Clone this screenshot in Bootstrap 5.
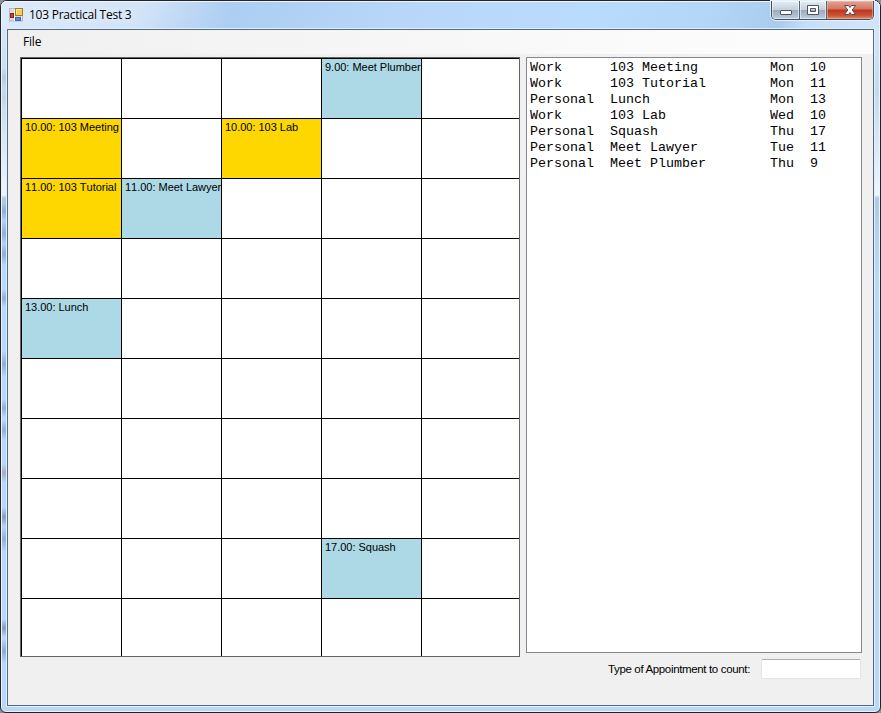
<!DOCTYPE html>
<html lang="en">
<head>
<meta charset="utf-8">
<meta name="viewport" content="width=device-width, initial-scale=1">
<title>103 Practical Test 3</title>
<link href="https://cdn.jsdelivr.net/npm/bootstrap@5.3.0/dist/css/bootstrap.min.css" rel="stylesheet">
<style>
body{background:#8f8f8f;font-family:"Liberation Sans",Arial,sans-serif;color:#000}
.app-window{width:881px;height:713px;border:1px solid #20242e;border-radius:7px 7px 6px 6px;padding:0 6px 6px;
  box-shadow:inset 0 0 0 1px #e9f5ff;
  background:
    radial-gradient(ellipse 12px 10px at 3px 77px,#b3cbe6,transparent),
    radial-gradient(ellipse 12px 9px at 3px 98px,#c0d4ea,transparent),
    radial-gradient(ellipse 12px 9px at 3px 210px,#8fadd0,transparent),
    radial-gradient(ellipse 12px 11px at 3px 232px,#8fadd0,transparent),
    radial-gradient(ellipse 12px 11px at 3px 253px,#8fadd0,transparent),
    radial-gradient(ellipse 12px 9px at 3px 297px,#8fadd0,transparent),
    radial-gradient(ellipse 12px 13px at 3px 363px,#8fadd0,transparent),
    radial-gradient(ellipse 12px 9px at 3px 407px,#8fadd0,transparent),
    radial-gradient(ellipse 12px 10px at 3px 429px,#8fadd0,transparent),
    radial-gradient(ellipse 12px 9px at 3px 472px,#a9a7c3,transparent),
    radial-gradient(ellipse 12px 10px at 3px 516px,#859cba,transparent),
    radial-gradient(ellipse 12px 13px at 3px 538px,#8fadd0,transparent),
    radial-gradient(ellipse 12px 9px at 3px 627px,#859cba,transparent),
    radial-gradient(ellipse 12px 12px at 3px 650px,#8ba8c8,transparent),
    linear-gradient(#d3e6fa 28px,#c5d9ee 90px,#eff5fc 194px,#aecae6 197px,#b9d9f9 270px,#b9d7f8)}
.title-bar{height:28px;margin:0 -6px;padding:0 6px 0 8px;border-radius:6px 6px 0 0;
  box-shadow:inset 0 1px #eef7ff,inset 1px 0 #e9f5ff,inset -1px 0 #e9f5ff;
  background:linear-gradient(115deg,#dceafa 0,#d3e4f7 130px,#bcd6f3 180px,#abcef2 215px,#b2d3f5 300px,#b9d8f9 390px,#b9dbfc 540px,#b4d6f6 650px,#a9cbec 715px,#c5dff9 740px,#cfe3fa 780px,#cfe3fa)}
.title-text,.menu-text{font-family:"Open Sans","Noto Sans",sans-serif;font-size:12px;line-height:16px}
.title-text{letter-spacing:-.25px;margin-left:6px;padding-top:6px;text-shadow:0 0 6px #fff}
.app-icon{margin-top:7px}
.caption-buttons{width:103px;height:19px;border:1px solid #45505f;border-top:0;border-radius:0 0 5px 5px;overflow:hidden;box-shadow:0 0 0 1px #e4f1fd}
.cap-btn{border:0;padding:0;background:linear-gradient(#e3edf7,#c4d0de 48%,#9aaabd 50%,#bdcde0);box-shadow:inset 0 0 0 1px #ffffff88}
.cap-min{width:28px;border-right:1px solid #596575}
.cap-max{width:27px;border-right:1px solid #596575}
.cap-close{width:46px;background:linear-gradient(#e6a293,#d37562 45%,#bd3419 50%,#cb5535 80%,#e08a67);box-shadow:inset 0 0 0 1px #ffc9b377}
.client{width:867px;height:677px;border:1px solid #54697d;background:#f0f0f0;box-shadow:0 0 0 1px #dff1fd}
.menu-strip{height:24px;background:linear-gradient(90deg,#f0f0f0,#fcfcfc 85%);padding:4px 15px}
.menu-text{letter-spacing:-.2px}
.work-area{padding:3px 11px 0 12px;gap:6px}
.calendar{width:500px;height:600px;border:1px solid #646464;background:#fff;display:grid;grid-template-columns:repeat(5,100px);grid-auto-rows:60px;overflow:hidden}
.slot{border-left:1px solid #000;border-top:1px solid #000;font-size:11px;line-height:13px;padding:2px 0 0 3px;white-space:nowrap;font-kerning:none;letter-spacing:-.02px}
.slot-work{background:#ffd700}
.slot-personal{background:#add8e6}
.appt-list{width:336px;height:596px;border:1px solid #828790;background:#fff;padding:2px 3px;margin:0;font:13.333px/16px "Liberation Mono","Courier New",monospace;color:#000;overflow:hidden}
.count-row{margin-top:6px;height:20px;gap:11px;padding-right:1px}
.count-label{font-size:11.5px;letter-spacing:-.35px;line-height:16px;white-space:nowrap}
.count-input{width:100px;height:20px;min-height:0;padding:1px 3px;border:1px solid #e2e3ea;border-top-color:#abadb3;border-radius:2px;font-size:12px;background:#fff}
</style>
</head>
<body class="m-0 overflow-hidden">
<div class="app-window">
  <header class="title-bar d-flex align-items-start">
    <svg class="app-icon flex-shrink-0" width="14" height="14" viewBox="0 0 14 14">
      <rect x=".5" y=".5" width="13" height="12.5" fill="#d9dce2" stroke="#b4bac4"/>
      <path d="M5.5 1v12M1 9.5h12" stroke="#f5f6f8"/>
      <rect x="6.5" y=".5" width="7" height="7" fill="#f8cf48" stroke="#a87b1c"/>
      <path d="M7.5 6V1.5h5" fill="none" stroke="#ffe99a"/>
      <rect x="1.500" y="5.500" width="3" height="4" fill="#cf3c35" stroke="#8e201f"/>
      <rect x="6.500" y="9.500" width="5" height="3" fill="#5b8fe0" stroke="#4168ad"/>
    </svg>
    <div class="title-text flex-grow-1">103 Practical Test 3</div>
    <div class="caption-buttons d-flex">
      <button class="cap-btn cap-min d-flex" aria-label="Minimize"><svg width="27" height="19"><rect x="8.500" y="9.500" width="11" height="4" rx=".5" fill="#fff" stroke="#4f5560"/></svg></button>
      <button class="cap-btn cap-max d-flex" aria-label="Maximize"><svg width="26" height="19"><path fill="#fff" stroke="#4f5560" fill-rule="evenodd" d="M7.500 4.500h11v9h-11zM10.500 7.500v3h5v-3z"/></svg></button>
      <button class="cap-btn cap-close d-flex" aria-label="Close"><svg width="46" height="19"><path fill="#fff" stroke="#574b55" stroke-linejoin="round" d="M17.500 4.500h4l1.500 2 1.500-2h4L25.200 9l3.300 4.500h-4l-1.500-2-1.500 2h-4L20.800 9z"/></svg></button>
    </div>
  </header>
  <main class="client">
    <nav class="menu-strip d-flex"><span class="menu-text">File</span></nav>
    <div class="work-area d-flex align-items-start">
      <section class="calendar flex-shrink-0">
        <div class="slot"></div><div class="slot"></div><div class="slot"></div><div class="slot slot-personal">9.00: Meet Plumber</div><div class="slot"></div>
        <div class="slot slot-work">10.00: 103 Meeting</div><div class="slot"></div><div class="slot slot-work">10.00: 103 Lab</div><div class="slot"></div><div class="slot"></div>
        <div class="slot slot-work">11.00: 103 Tutorial</div><div class="slot slot-personal">11.00: Meet Lawyer</div><div class="slot"></div><div class="slot"></div><div class="slot"></div>
        <div class="slot"></div><div class="slot"></div><div class="slot"></div><div class="slot"></div><div class="slot"></div>
        <div class="slot slot-personal">13.00: Lunch</div><div class="slot"></div><div class="slot"></div><div class="slot"></div><div class="slot"></div>
        <div class="slot"></div><div class="slot"></div><div class="slot"></div><div class="slot"></div><div class="slot"></div>
        <div class="slot"></div><div class="slot"></div><div class="slot"></div><div class="slot"></div><div class="slot"></div>
        <div class="slot"></div><div class="slot"></div><div class="slot"></div><div class="slot"></div><div class="slot"></div>
        <div class="slot"></div><div class="slot"></div><div class="slot"></div><div class="slot slot-personal">17.00: Squash</div><div class="slot"></div>
        <div class="slot"></div><div class="slot"></div><div class="slot"></div><div class="slot"></div><div class="slot"></div>
      </section>
      <section class="d-flex flex-column">
        <pre class="appt-list">Work      103 Meeting         Mon  10
Work      103 Tutorial        Mon  11
Personal  Lunch               Mon  13
Work      103 Lab             Wed  10
Personal  Squash              Thu  17
Personal  Meet Lawyer         Tue  11
Personal  Meet Plumber        Thu  9</pre>
        <div class="count-row d-flex justify-content-end align-items-center">
          <label class="count-label" for="count">Type of Appointment to count:</label>
          <input class="form-control count-input" id="count" type="text">
        </div>
      </section>
    </div>
  </main>
</div>
<script src="https://cdn.jsdelivr.net/npm/bootstrap@5.3.0/dist/js/bootstrap.bundle.min.js"></script>
</body>
</html>
